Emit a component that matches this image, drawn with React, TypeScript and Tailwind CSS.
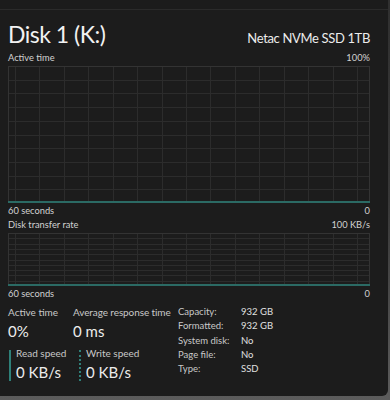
import React from "react";

function Grid({ w, h, rows }: { w: number; h: number; rows: number }) {
  const vx: number[] = [];
  for (let k = 0; k < 15; k++) vx.push(Math.round(7 + k * 24.43) + 0.5);
  const hy: number[] = [];
  for (let k = 1; k < rows; k++) hy.push(Math.round((k * h) / rows) + 0.5);
  return (
    <svg width={w} height={h} className="block">
      <rect x={0.5} y={0.5} width={w - 1} height={h - 1} fill="#1c1c1c" stroke="#333333" />
      {vx.map((x) => (
        <line key={"v" + x} x1={x} y1={1} x2={x} y2={h - 1} stroke="#2c2c2c" />
      ))}
      {hy.map((y) => (
        <line key={"h" + y} x1={1} y1={y} x2={w - 1} y2={y} stroke="#2c2c2c" />
      ))}
      <line x1={0} y1={h - 1} x2={w} y2={h - 1} stroke="#2b6a64" strokeWidth={2} />
    </svg>
  );
}

export default function App() {
  const font = { fontFamily: 'Lato, "Noto Sans", sans-serif' };
  return (
    <div
      className="w-[390px] h-[400px] bg-gradient-to-b from-[#303030] via-[#383838] to-[#5c5c5c] overflow-hidden"
      style={font}
    >
      <div className="w-[388px] h-[396px] bg-[#1c1c1c] rounded-br-[6px] flex flex-col text-[#d2d2d2]">
        <div className="h-[9px]" />
        <div className="h-px bg-[#2b2b2b]" />
        <div className="flex items-start justify-between pl-[8px] pr-[18px] h-[41px]">
          <div className="text-[23px] leading-[28px] mt-[10px] text-[#f2f2f2] tracking-[-0.5px]">Disk 1 (K:)</div>
          <div className="text-[13px] leading-[20px] mt-[18px] text-[#ececec] tracking-[-0.35px]">Netac NVMe SSD 1TB</div>
        </div>
        <div className="flex justify-between pl-[8px] pr-[18px] text-[9.3px] leading-[14px]">
          <span>Active time</span>
          <span>100%</span>
        </div>
        <div className="pl-[8px] mt-[1px]">
          <Grid w={362} h={137} rows={10} />
        </div>
        <div className="flex justify-between pl-[8px] pr-[18px] text-[9.3px] leading-[14px] mt-[1px]">
          <span>60 seconds</span>
          <span>0</span>
        </div>
        <div className="flex justify-between pl-[8px] pr-[18px] text-[9.3px] leading-[14px]">
          <span>Disk transfer rate</span>
          <span>100 KB/s</span>
        </div>
        <div className="pl-[8px] mt-[1px]">
          <Grid w={362} h={53} rows={10} />
        </div>
        <div className="flex justify-between pl-[8px] pr-[18px] text-[9.3px] leading-[14px] mt-[1px]">
          <span>60 seconds</span>
          <span>0</span>
        </div>
        <div className="flex pl-[8px] mt-[4px]">
          <div className="flex flex-col w-[170px]">
            <div className="flex">
              <div className="w-[65px]">
                <div className="text-[10px] leading-[14px] text-[#c8c8c8]">Active time</div>
                <div className="text-[15px] leading-[20px] mt-[2px] text-[#ececec]">0%</div>
              </div>
              <div>
                <div className="text-[10px] leading-[14px] text-[#c8c8c8] whitespace-nowrap tracking-[-0.1px]">Average response time</div>
                <div className="text-[15px] leading-[20px] mt-[2px] text-[#ececec]">0 ms</div>
              </div>
            </div>
            <div className="flex mt-[5px]">
              <div className="w-[71px] flex">
                <div className="w-[2px] h-[31px] mt-[4px] bg-[#2e8079] ml-px" />
                <div className="pl-[5px]">
                  <div className="text-[10px] leading-[14px] text-[#c8c8c8]">Read speed</div>
                  <div className="text-[15px] leading-[20px] mt-[2px] text-[#ececec]">0 KB/s</div>
                </div>
              </div>
              <div className="flex">
                <div className="w-[2px] h-[31px] mt-[4px] border-l-2 border-dotted border-[#2e8079]" />
                <div className="pl-[5px]">
                  <div className="text-[10px] leading-[14px] text-[#c8c8c8]">Write speed</div>
                  <div className="text-[15px] leading-[20px] mt-[2px] text-[#ececec]">0 KB/s</div>
                </div>
              </div>
            </div>
          </div>
          <div className="grid grid-cols-[63px_auto] text-[9.5px] leading-[14.3px] text-[#c8c8c8] content-start">
            <span>Capacity:</span>
            <span className="text-[#e0e0e0]">932 GB</span>
            <span>Formatted:</span>
            <span className="text-[#e0e0e0]">932 GB</span>
            <span>System disk:</span>
            <span className="text-[#e0e0e0]">No</span>
            <span>Page file:</span>
            <span className="text-[#e0e0e0]">No</span>
            <span>Type:</span>
            <span className="text-[#e0e0e0]">SSD</span>
          </div>
        </div>
      </div>
    </div>
  );
}
